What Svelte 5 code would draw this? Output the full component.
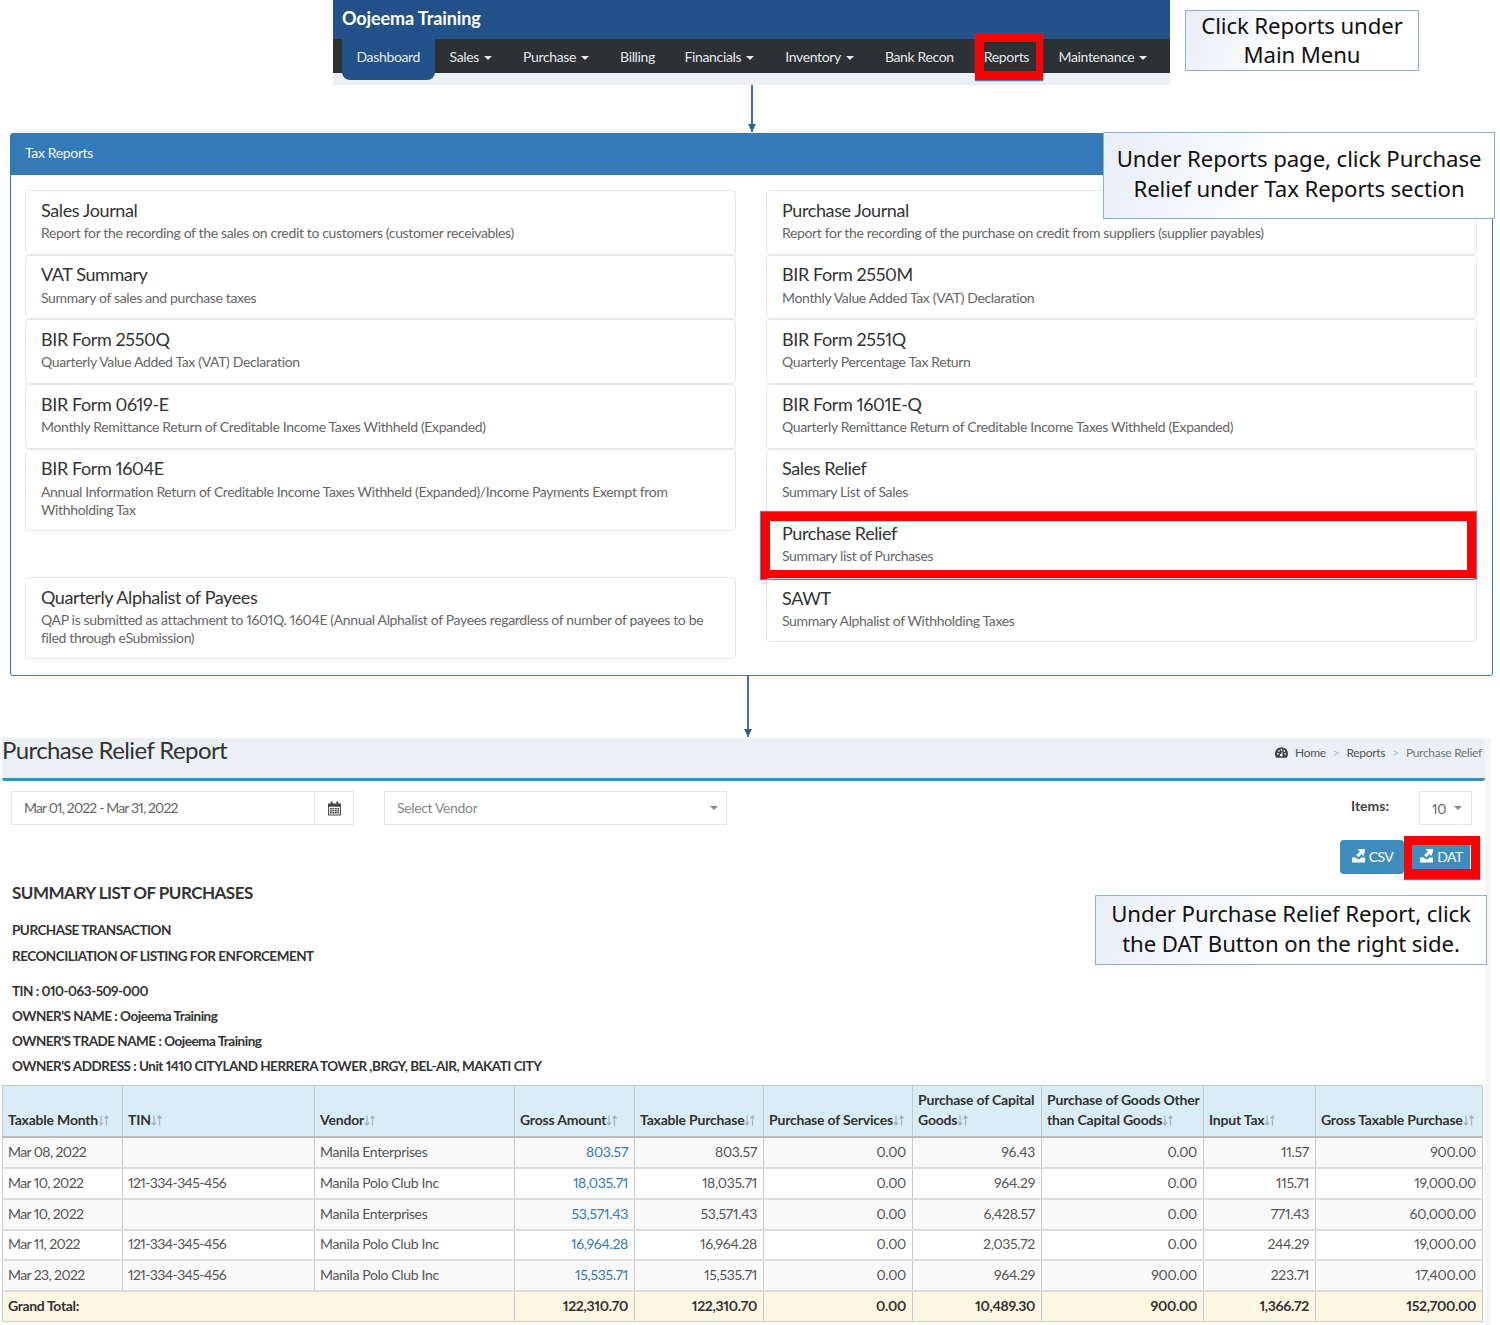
<script>
	const nav = [
		{ label: 'Dashboard', active: true },
		{ label: 'Sales', caret: true },
		{ label: 'Purchase', caret: true },
		{ label: 'Billing' },
		{ label: 'Financials', caret: true },
		{ label: 'Inventory', caret: true },
		{ label: 'Bank Recon' },
		{ label: 'Reports', marked: true },
		{ label: 'Maintenance', caret: true }
	]

	const leftReports = [
		{ title: 'Sales Journal', text: 'Report for the recording of the sales on credit to customers (customer receivables)' },
		{ title: 'VAT Summary', text: 'Summary of sales and purchase taxes' },
		{ title: 'BIR Form 2550Q', text: 'Quarterly Value Added Tax (VAT) Declaration' },
		{ title: 'BIR Form 0619-E', text: 'Monthly Remittance Return of Creditable Income Taxes Withheld (Expanded)' },
		{ title: 'BIR Form 1604E', text: 'Annual Information Return of Creditable Income Taxes Withheld (Expanded)/Income Payments Exempt from Withholding Tax' },
		{ title: 'Quarterly Alphalist of Payees', text: 'QAP is submitted as attachment to 1601Q. 1604E (Annual Alphalist of Payees regardless of number of payees to be filed through eSubmission)', apart: true }
	]

	const rightReports = [
		{ title: 'Purchase Journal', text: 'Report for the recording of the purchase on credit from suppliers (supplier payables)' },
		{ title: 'BIR Form 2550M', text: 'Monthly Value Added Tax (VAT) Declaration' },
		{ title: 'BIR Form 2551Q', text: 'Quarterly Percentage Tax Return' },
		{ title: 'BIR Form 1601E-Q', text: 'Quarterly Remittance Return of Creditable Income Taxes Withheld (Expanded)' },
		{ title: 'Sales Relief', text: 'Summary List of Sales' },
		{ title: 'Purchase Relief', text: 'Summary list of Purchases', marked: true },
		{ title: 'SAWT', text: 'Summary Alphalist of Withholding Taxes' }
	]

	const info = [
		{ text: 'PURCHASE TRANSACTION', cls: 'l1' },
		{ text: 'RECONCILIATION OF LISTING FOR ENFORCEMENT', cls: 'l2' },
		{ text: 'TIN : 010-063-509-000', cls: 'l3' },
		{ text: "OWNER'S NAME : Oojeema Training", cls: 'l4' },
		{ text: "OWNER'S TRADE NAME : Oojeema Training", cls: 'l4' },
		{ text: "OWNER'S ADDRESS : Unit 1410 CITYLAND HERRERA TOWER ,BRGY, BEL-AIR, MAKATI CITY", cls: 'l4' }
	]

	const columns = [
		{ w: 120, html: ['Taxable Month'] },
		{ w: 192, html: ['TIN'] },
		{ w: 200, html: ['Vendor'] },
		{ w: 120, html: ['Gross Amount'] },
		{ w: 129, html: ['Taxable Purchase'] },
		{ w: 149, html: ['Purchase of Services'] },
		{ w: 129, html: ['Purchase of Capital', 'Goods'] },
		{ w: 162, html: ['Purchase of Goods Other', 'than Capital Goods'] },
		{ w: 112, html: ['Input Tax'] },
		{ w: 167, html: ['Gross Taxable Purchase'] }
	]

	const rows = [
		['Mar 08, 2022', '', 'Manila Enterprises', '803.57', '803.57', '0.00', '96.43', '0.00', '11.57', '900.00'],
		['Mar 10, 2022', '121-334-345-456', 'Manila Polo Club Inc', '18,035.71', '18,035.71', '0.00', '964.29', '0.00', '115.71', '19,000.00'],
		['Mar 10, 2022', '', 'Manila Enterprises', '53,571.43', '53,571.43', '0.00', '6,428.57', '0.00', '771.43', '60,000.00'],
		['Mar 11, 2022', '121-334-345-456', 'Manila Polo Club Inc', '16,964.28', '16,964.28', '0.00', '2,035.72', '0.00', '244.29', '19,000.00'],
		['Mar 23, 2022', '121-334-345-456', 'Manila Polo Club Inc', '15,535.71', '15,535.71', '0.00', '964.29', '900.00', '223.71', '17,400.00']
	]

	const totals = ['122,310.70', '122,310.70', '0.00', '10,489.30', '900.00', '1,366.72', '152,700.00']
</script>

{#snippet exportIcon()}
	<svg class="export" viewBox="0 0 16 15" width="15" height="14" aria-hidden="true">
		<path fill="#fff" d="M1 9h4.500l1.500 2h2.500l1.500-2H15v5.500H1z" />
		<path fill="#fff" d="M7 0h8v2.500L13 8 11.500 5.200 8 9 5.500 6.500 9.500 3z" />
	</svg>
{/snippet}

{#snippet reportItem(item)}
	<div class="item" class:apart={item.apart} class:marked={item.marked}>
		<h4>{item.title}</h4>
		<p>{item.text}</p>
	</div>
{/snippet}

<div class="page">
	<header class="top">
		<div class="navbox">
			<div class="brand">Oojeema Training</div>
			<nav>
				{#each nav as n}
					<span class="link" class:active={n.active} class:marked={n.marked} class:drop={n.caret}>
						{n.label}{#if n.caret}<i class="caret"></i>{/if}
					</span>
				{/each}
			</nav>
		</div>
		<div class="note note-top">Click Reports under<br />Main Menu</div>
	</header>

	<div class="arrow arrow1"><b></b></div>

	<section class="panel">
		<div class="panel-head">Tax Reports</div>
		<div class="note note-panel">Under Reports page, click Purchase<br />Relief under Tax Reports section</div>
		<div class="panel-body">
			<div class="col">
				{#each leftReports as item}{@render reportItem(item)}{/each}
			</div>
			<div class="col">
				{#each rightReports as item}{@render reportItem(item)}{/each}
			</div>
		</div>
	</section>

	<div class="arrow arrow2"><b></b></div>

	<section class="report">
		<div class="report-head">
			<h1>Purchase Relief Report</h1>
			<div class="crumbs">
				<svg viewBox="0 0 16 13" width="13" height="11" aria-hidden="true">
					<path fill="#444" fill-rule="evenodd" d="M8 0a8 8 0 0 1 8 8c0 1.700-.5 3.300-1.400 4.600l-.4.400H1.800l-.4-.4A8 8 0 0 1 8 0zM3.500 7a1.100 1.100 0 1 0 0 2.200 1.100 1.100 0 0 0 0-2.200zM5 3.500a1.100 1.100 0 1 0 0 2.200 1.100 1.100 0 0 0 0-2.200zM8 2a1.100 1.100 0 1 0 0 2.200A1.100 1.100 0 0 0 8 2zm3.500 1.500a1.100 1.100 0 1 0 0 2.200 1.100 1.100 0 0 0 0-2.200zm1 3.500a1.100 1.100 0 1 0 0 2.200 1.100 1.100 0 0 0 0-2.200zM9.500 4.500 7.300 8a1.700 1.700 0 1 0 1.600.5z" />
				</svg>
				<span class="home">Home</span><em>&gt;</em><span>Reports</span><em>&gt;</em><span class="here">Purchase Relief</span>
			</div>
		</div>

		<div class="report-body">
			<div class="filters">
				<div class="daterange">
					<span class="value">Mar 01, 2022 - Mar 31, 2022</span>
					<span class="cal">
						<svg viewBox="0 0 14 15" width="13" height="15" aria-hidden="true">
							<path fill="#444" fill-rule="evenodd" d="M3 0h2v2h4V0h2v2h3v13H0V2h3zM1 5.500v8.500h12V5.500zM2 7h2v1.500H2zm2.700 0h2v1.500h-2zm2.700 0h2v1.500h-2zm2.700 0H12v1.500h-1.900zM2 9.200h2v1.500H2zm2.700 0h2v1.500h-2zm2.700 0h2v1.500h-2zm2.700 0H12v1.500h-1.900zM2 11.400h2v1.500H2zm2.700 0h2v1.500h-2zm2.700 0h2v1.500h-2zm2.700 0H12v1.500h-1.900z" />
						</svg>
					</span>
				</div>
				<div class="vendor">
					<span>Select Vendor</span><i class="caret grey"></i>
				</div>
				<div class="items">
					<label for="items-box">Items:</label>
					<div id="items-box" class="items-box"><span>10</span><i class="caret grey"></i></div>
				</div>
			</div>

			<div class="buttons">
				<span class="btn">{@render exportIcon()}CSV</span>
				<span class="btn dat">{@render exportIcon()}DAT</span>
			</div>

			<div class="note note-report">Under Purchase Relief Report, click<br />the DAT Button on the right side.</div>

			<h3>SUMMARY LIST OF PURCHASES</h3>
			{#each info as line}
				<div class="info {line.cls}">{line.text}</div>
			{/each}
		</div>

		<table>
			<colgroup>
				{#each columns as c}<col style="width: {c.w}px" />{/each}
			</colgroup>
			<thead>
				<tr>
					{#each columns as c}
						<th>
							{#each c.html as part, i}{#if i > 0}<br />{/if}{part}{/each}<svg class="sort" viewBox="0 0 12 12" width="12" height="13" aria-hidden="true"><path d="M3 1v9M1 8l2 2.500L5 8M8.500 11V2M6.500 4l2-2.500 2 2.500" fill="none" stroke="#aab3ba" stroke-width="1.300" /></svg>
						</th>
					{/each}
				</tr>
			</thead>
			<tbody>
				{#each rows as row}
					<tr>
						{#each row as cell, i}
							<td class:num={i > 2} class:amount={i === 3} class:tight={i < 2}>{cell}</td>
						{/each}
					</tr>
				{/each}
				<tr class="total">
					<td colspan="3">Grand Total:</td>
					{#each totals as t}<td class="num">{t}</td>{/each}
				</tr>
			</tbody>
		</table>
	</section>
</div>

<style>
	:global(body) {
		margin: 0;
		background: #fff;
	}

	.page {
		width: 1500px;
		height: 1325px;
		overflow: hidden;
		font-family: Lato, 'Noto Sans', sans-serif;
		font-size: 14px;
		font-variant-numeric: proportional-nums;
		color: #333;
		letter-spacing: -0.35px;
	}

	.top {
		display: flex;
		align-items: flex-start;
		padding-left: 333px;
	}

	.navbox {
		width: 837px;
		height: 85px;
		background: #ecf0f5;
	}

	.brand {
		height: 39px;
		line-height: 37px;
		padding-left: 9px;
		box-sizing: border-box;
		background: #23528b;
		color: #fff;
		font-size: 18px;
		font-weight: 700;
		letter-spacing: -0.1px;
	}

	nav {
		display: flex;
		height: 34px;
		padding-left: 9px;
		background: #2c3133;
	}

	.link {
		height: 34px;
		line-height: 35px;
		padding: 0 15px 0 14.500px;
		color: #e4e8ea;
		white-space: nowrap;
		position: relative;
	}

	.link.drop {
		padding-right: 16.500px;
	}

	.link.active {
		height: 41px;
		background: #23528b;
		border-radius: 0 0 8px 8px;
	}

	.link.marked::after {
		content: '';
		position: absolute;
		inset: -6px -4px -7px 1px;
		border: 9px solid #f00;
		border-width: 9px 7px 9px 9px;
		box-sizing: border-box;
		box-shadow: 0 1px 1px #4a7ab0;
	}

	.link.marked {
		padding: 0 10px;
		margin: 0 5px;
	}

	.caret {
		display: inline-block;
		margin-left: 5px;
		vertical-align: middle;
		border-top: 4px solid #e4e8ea;
		border-left: 4px solid transparent;
		border-right: 4px solid transparent;
	}

	.caret.grey {
		border-top-color: #888;
		border-left-width: 4px;
		border-right-width: 4px;
	}

	.note {
		box-sizing: border-box;
		background: linear-gradient(110deg, #e8edf7 0%, #fff 45%);
		border: 1px solid #8db0d0;
		color: #111;
		font-family: 'Noto Sans', sans-serif;
		font-size: 22.200px;
		letter-spacing: -0.1px;
		line-height: 30px;
		text-align: center;
	}

	.note-top {
		margin: 10px 0 0 15px;
		width: 234px;
		height: 61px;
		line-height: 29px;
	}

	.note-panel {
		position: absolute;
		z-index: 2;
		left: 1103px;
		top: 132px;
		width: 392px;
		height: 87px;
		padding-top: 11px;
	}

	.note-report {
		position: absolute;
		z-index: 2;
		left: 1093px;
		top: 157px;
		width: 392px;
		height: 70px;
		padding-top: 3px;
	}

	.arrow {
		width: 2px;
		background: #3f72a6;
		position: relative;
	}

	.arrow b {
		position: absolute;
		left: -3px;
		bottom: 0;
		border-top: 8px solid #2f5f95;
		border-left: 4px solid transparent;
		border-right: 4px solid transparent;
	}

	.arrow1 {
		height: 47px;
		margin-left: 751px;
	}

	.arrow2 {
		height: 61px;
		margin-left: 746.500px;
	}

	.panel {
		margin: 1px 7px 0 10px;
		height: 543px;
		box-sizing: border-box;
		border: 1px solid #337ab7;
		border-radius: 3px;
	}

	.panel-head {
		height: 41px;
		line-height: 38px;
		padding-left: 14px;
		background: #337ab7;
		color: #f0f5fa;
		font-size: 14px;
	}

	.panel-body {
		display: grid;
		grid-template-columns: 711px 711px;
		column-gap: 30px;
		padding: 15px 14px 0;
	}

	.col {
		display: flex;
		flex-direction: column;
	}

	.item {
		position: relative;
		box-sizing: border-box;
		min-height: 64.700px;
		padding: 8.500px 15px 11.500px;
		border: 1px solid #e7e7e7;
		border-radius: 4px;
	}

	.item:last-child {
		min-height: 0;
		padding-bottom: 10.500px;
	}

	.item.apart {
		margin-top: 46px;
	}

	.item.marked::after {
		content: '';
		position: absolute;
		inset: -2px 0 -2px -6px;
		border: 9px solid #f00;
		box-sizing: border-box;
		box-shadow: 0 0 1px 1px #5b86b8;
	}

	h4 {
		margin: 0 0 4.500px;
		font-size: 18px;
		font-weight: 400;
		line-height: 20px;
		color: #333;
		letter-spacing: -0.4px;
	}

	.item p {
		margin: 0;
		font-size: 14px;
		line-height: 18px;
		color: #666;
	}

	.report {
		position: relative;
		width: 1483px;
		margin: 0 0 0 2px;
		padding-right: 0;
		background: #fff;
		box-shadow: 6px 0 0 #f3f5f9;
		height: 587px;
	}

	.report-head {
		height: 40px;
		background: #ecf0f5;
		display: flex;
		justify-content: space-between;
		border-bottom: 3px solid #3c8dbc;
		border-radius: 0 0 3px 3px;
		margin-top: 1px;
	}

	h1 {
		margin: -1px 0 0;
		font-size: 24px;
		font-weight: 400;
		line-height: 25px;
		color: #333;
		letter-spacing: -0.6px;
	}

	.crumbs {
		display: flex;
		align-items: center;
		height: 29px;
		padding-right: 3px;
		font-size: 12px;
		color: #555;
		letter-spacing: -0.3px;
	}

	.crumbs em {
		font-style: normal;
		color: #bbb;
		margin: 0 7px;
	}

	.crumbs .home {
		margin-left: 7px;
	}

	.crumbs .here {
		color: #777;
	}

	.report-body {
		height: 304px;
		padding: 10px 0 0 9px;
		box-sizing: border-box;
	}

	.filters {
		display: flex;
		align-items: flex-start;
		height: 34px;
	}

	.daterange,
	.vendor,
	.items-box {
		box-sizing: border-box;
		height: 34px;
		border: 1px solid #e3e6ea;
		display: flex;
		align-items: center;
		color: #666;
	}

	.daterange {
		width: 343px;
	}

	.value {
		flex: 1;
		padding: 0 0 2px 12px;
		letter-spacing: -0.85px;
	}

	.cal {
		width: 38px;
		height: 100%;
		border-left: 1px solid #e3e6ea;
		display: flex;
		align-items: center;
		justify-content: center;
	}

	.vendor {
		width: 343px;
		margin-left: 30px;
		padding: 0 8px 0 12px;
		justify-content: space-between;
		color: #888;
	}

	.vendor span {
		padding-bottom: 2px;
	}

	.items {
		display: flex;
		align-items: flex-start;
		margin-left: auto;
		margin-right: 13px;
	}

	label {
		font-weight: 700;
		margin: 6px 30px 0 0;
		color: #444;
		letter-spacing: 0;
	}

	.items-box {
		width: 53px;
		padding-left: 12px;
		gap: 8px;
	}

	.items-box .caret {
		margin-left: 0;
	}

	.buttons {
		display: flex;
		justify-content: flex-end;
		gap: 8px;
		margin: 15px 15px 0 0;
	}

	.btn {
		position: relative;
		display: flex;
		align-items: center;
		justify-content: center;
		gap: 3px;
		box-sizing: border-box;
		height: 34px;
		width: 64px;
		padding-bottom: 2px;
		background: #3f8dbd;
		color: #fff;
		border-radius: 4px;
		letter-spacing: -0.6px;
	}

	.btn.dat {
		width: 58px;
		border-radius: 0;
	}

	.btn.dat::after {
		content: '';
		position: absolute;
		inset: -4px -10px -5px -8px;
		border: 9px solid #f00;
		border-width: 9px 9px 10px 8px;
		box-sizing: border-box;
		box-shadow: 0 1px 1px #4a7ab0;
	}

	h3 {
		margin: 9px 0 18px 1px;
		font-size: 17px;
		font-weight: 700;
		line-height: 20px;
		color: #333;
		letter-spacing: -0.5px;
	}

	.info {
		margin-left: 1px;
		font-weight: 700;
		font-size: 13.500px;
		line-height: 18px;
		color: #333;
		letter-spacing: -0.5px;
	}

	.info.l2 {
		margin-top: 8px;
	}

	.info.l3 {
		margin-top: 17px;
	}

	.info.l4 {
		margin-top: 7px;
	}

	table {
		border-collapse: collapse;
		table-layout: fixed;
		width: 1480px;
		border: 1px solid #cfd3d6;
		font-size: 14px;
	}

	th {
		height: 51px;
		box-sizing: border-box;
		background: #d9edf7;
		text-align: left;
		vertical-align: bottom;
		padding: 0 5px 6px;
		font-weight: 700;
		line-height: 20px;
		color: #333;
		border: 1px solid #c4c8cb;
		border-bottom: 2px solid #bbb;
		white-space: nowrap;
		letter-spacing: -0.2px;
	}

	.sort {
		vertical-align: -2px;
	}

	td {
		height: 31px;
		box-sizing: border-box;
		padding: 0 5px 2px;
		color: #555;
		border: 1px solid #c9cccf;
		border-top: 2px solid #ddd;
		white-space: nowrap;
	}

	tbody tr:nth-child(4) td {
		height: 30px;
	}

	td.tight {
		letter-spacing: -0.6px;
	}

	td.num {
		letter-spacing: -0.3px;
		text-align: right;
		padding-right: 6px;
	}

	tbody tr:nth-child(odd) td {
		background: #f9f9f9;
	}

	td.amount {
		color: #337ab7;
	}

	tbody tr.total td {
		background: #fcf6e3;
		font-weight: 700;
		color: #333;
	}
</style>
